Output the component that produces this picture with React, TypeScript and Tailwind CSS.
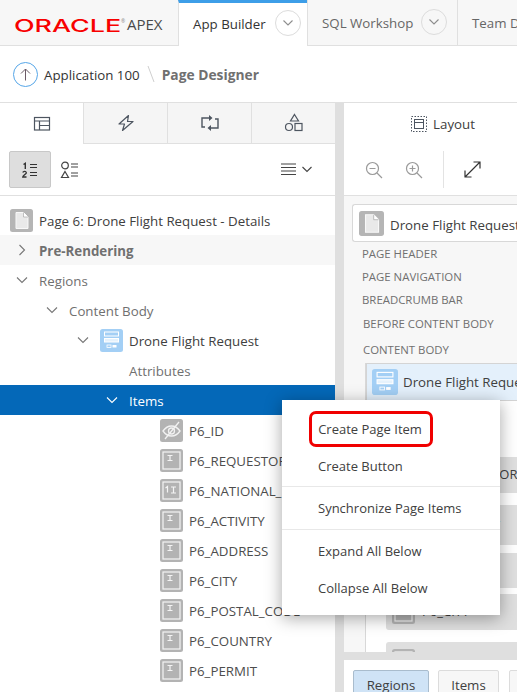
import type { ReactNode } from "react";

const font = "font-['Open_Sans','Noto_Sans',sans-serif]";

const Chevron = ({ open, className = "" }: { open: boolean; className?: string }) => (
  <svg width="12" height="12" viewBox="0 0 12 12" fill="none" stroke="currentColor" strokeWidth="1.1" className={className}>
    {open ? <path d="M1 3.500l5 5 5-5" /> : <path d="M3.500 1l5 5-5 5" />}
  </svg>
);

const NavCaret = () => (
  <span className="-mt-[4px] flex h-[26px] w-[26px] shrink-0 items-center justify-center rounded-full border border-[#dcdcdc]">
    <svg width="12" height="8" viewBox="0 0 12 8" fill="none" stroke="#8d8d8d" strokeWidth="1.1">
      <path d="M1.500 1.500L6 6l4.500-4.500" />
    </svg>
  </span>
);

const PageIcon = ({ size = 23 }: { size?: number }) => (
  <svg width={size} height={size} viewBox="0 0 23 23" className="shrink-0">
    <rect width="23" height="23" rx="2.500" fill="#b5b5b5" />
    <path d="M6 3.500h7.500L18 8v11.500H6z" fill="#e9e9e9" stroke="#f8f8f8" />
    <path d="M13.500 3.500V8H18" fill="#fff" stroke="#9d9d9d" strokeWidth="0.6" />
  </svg>
);

const RegionIcon = ({ size = 23 }: { size?: number }) => (
  <svg width={size} height={size} viewBox="0 0 23 23" className="shrink-0">
    <rect width="23" height="23" rx="2.500" fill="#a3cff5" />
    <rect x="4.500" y="3" width="14" height="4" fill="none" stroke="#fff" strokeWidth="1" />
    <rect x="4.500" y="9.500" width="14" height="3.500" fill="#e6f2fc" stroke="#fff" strokeWidth="1" />
    <rect x="7" y="16" width="4" height="2.500" fill="none" stroke="#fff" strokeWidth="0.8" />
    <rect x="12.500" y="16" width="4" height="2.500" fill="#fff" />
  </svg>
);

const ItemIcon = ({ kind = "text" }: { kind?: "text" | "hidden" | "number" }) => (
  <svg width="23" height="23" viewBox="0 0 23 23" className="shrink-0">
    <rect width="23" height="23" rx="2.500" fill="#b3b3b3" />
    {kind === "hidden" ? (
      <g fill="none" stroke="#f2f2f2" strokeWidth="1.300">
        <path d="M3 12c2.500-3.500 5.500-5 8.500-5s6 1.500 8.500 5c-2.500 3.500-5.500 5-8.500 5S5.500 15.500 3 12z" />
        <circle cx="11.500" cy="12" r="3" />
        <path d="M5 20L19 3" />
      </g>
    ) : (
      <>
        <rect x="3" y="3" width="17" height="17" fill="none" stroke="#f4f4f4" strokeWidth="1.200" />
        {kind === "text" ? (
          <path d="M7.500 6.500h5M10 6.500v5M7.500 11.500h5" stroke="#f4f4f4" strokeWidth="1.200" fill="none" />
        ) : (
          <path d="M5.500 9l2-1.500v6M11 8h5M13.500 8v6M11 14h5" stroke="#f4f4f4" strokeWidth="1.200" fill="none" />
        )}
      </>
    )}
  </svg>
);

const tabIcons: ReactNode[] = [
  <svg key="rendering" width="18" height="16" viewBox="0 0 18 16" fill="none" stroke="#4d5560" strokeWidth="1.200">
    <rect x="1.500" y="1.500" width="15" height="12.500" />
    <path d="M1.500 5h15M6.500 5v9M6.500 9.500h10" />
  </svg>,
  <svg key="dynamic" width="18" height="18" viewBox="0 0 18 18" fill="none" stroke="#4d5560" strokeWidth="1.200" strokeLinejoin="round">
    <path d="M11.500 1.500L2 10h5.500L5.500 16.500 16 7.500h-5.500z" />
  </svg>,
  <svg key="processing" width="20" height="18" viewBox="0 0 20 18" fill="none" stroke="#4d5560" strokeWidth="1.400">
    <path d="M9 4H2v9h3M11 14h7V5h-3" />
    <path d="M9 1v6l3.500-3zM11 11v6l-3.500-3z" fill="#4d5560" stroke="none" />
  </svg>,
  <svg key="shared" width="20" height="20" viewBox="0 0 20 20" fill="none" stroke="#4d5560" strokeWidth="1.200">
    <path d="M10.500 1.500l4 6.500h-8z" />
    <circle cx="5" cy="14" r="3.500" />
    <rect x="11" y="10.500" width="7" height="7" />
  </svg>,
];

const TreeRow = ({
  indent,
  open,
  icon,
  children,
  className = "",
}: {
  indent: number;
  open?: boolean;
  icon?: ReactNode;
  children: ReactNode;
  className?: string;
}) => (
  <div className={`flex h-[30px] shrink-0 items-center whitespace-nowrap ${className}`}>
    <span className="shrink-0" style={{ width: indent }} />
    {open !== undefined && <Chevron open={open} className="mr-[11px] shrink-0 text-[#777]" />}
    {icon && <span className="mr-[6px] flex shrink-0">{icon}</span>}
    <span className="pt-[4px]">{children}</span>
  </div>
);

const items: { name: string; kind?: "text" | "hidden" | "number" }[] = [
  { name: "P6_ID", kind: "hidden" },
  { name: "P6_REQUESTOR" },
  { name: "P6_NATIONAL_ID", kind: "number" },
  { name: "P6_ACTIVITY" },
  { name: "P6_ADDRESS" },
  { name: "P6_CITY" },
  { name: "P6_POSTAL_CODE" },
  { name: "P6_COUNTRY" },
  { name: "P6_PERMIT" },
];

const layoutTiles = [
  { text: "P6_REQUESTOR", height: "h-[36px]", mt: "mt-0" },
  { text: "P6_NATIONAL_ID", height: "h-[40px]", mt: "mt-[12px]", wrap: true },
  { text: "P6_ACTIVITY", height: "h-[35px]", mt: "mt-[8px]" },
  { text: "P6_CITY", height: "h-[36px]", mt: "mt-[6px]" },
  { text: "P6_POSTAL", height: "h-[36px]", mt: "mt-[12px]" },
];

export default function App() {
  return (
    <div className={`relative flex h-[692px] w-[517px] flex-col overflow-hidden bg-white text-[13.3px] text-[#404040] ${font}`}>
      {/* Top navigation */}
      <header className="flex h-[46px] shrink-0 border-b border-[#e0e0e0] bg-[#f7f7f7]">
        <div className="flex w-[178px] shrink-0 items-center pl-[14px] pt-[10px]">
          <span className="w-[107px] whitespace-nowrap">
            <span className="inline-block origin-left scale-x-[1.58] font-['Inter',sans-serif] text-[17px] font-medium leading-none text-[#f80000]">
              ORACLE
            </span>
          </span>
          <span className="-mt-[12px] w-[6px] text-[5px] leading-none text-[#888]">®</span>
          <span className="-mt-[7px] text-[15px] font-normal leading-none text-[#4a4a4a]">APEX</span>
        </div>
        <div className="-mb-px flex w-[129px] shrink-0 items-center border-t-[3px] border-l border-[#3d9ee8] border-l-[#e0e0e0] bg-white pl-[14px] text-[#333]">
          <span className="mr-[9px] whitespace-nowrap">App Builder</span>
          <NavCaret />
        </div>
        <div className="flex w-[150px] shrink-0 items-center border-l border-[#e0e0e0] pl-[14px] pt-[3px] text-[#666]">
          <span className="mr-[8px] whitespace-nowrap">SQL Workshop</span>
          <NavCaret />
        </div>
        <div className="flex min-w-0 flex-1 items-center overflow-hidden border-l border-[#e0e0e0] pl-[14px] pt-[3px] text-[#666]">
          <span className="whitespace-nowrap">Team Dev</span>
        </div>
      </header>

      {/* Breadcrumb */}
      <div className="flex h-[57px] shrink-0 items-center border-b border-[#e0e0e0] pl-[13px]">
        <span className="flex h-[25px] w-[25px] items-center justify-center rounded-full border border-[#56a6e8]">
          <svg width="11" height="13" viewBox="0 0 11 13" fill="none" stroke="#6b5a66" strokeWidth="1">
            <path d="M5.500 12.500V1M1 5.500L5.500 1 10 5.500" />
          </svg>
        </span>
        <span className="ml-[6px] pt-[4px] text-[#333]">Application 100</span>
        <svg width="10" height="18" viewBox="0 0 10 18" fill="none" stroke="#cfcfcf" className="ml-[6px]">
          <path d="M2 1l6 16" />
        </svg>
        <span className="ml-[6px] pt-[2px] text-[13.800px] font-bold text-[#707070]">Page Designer</span>
      </div>

      <div className="flex min-h-0 flex-1">
        {/* Left panel */}
        <div className="flex w-[335px] shrink-0 flex-col overflow-hidden">
          <div className="flex h-[41px] shrink-0">
            {tabIcons.map((icon, i) => (
              <div
                key={i}
                className={`flex items-center justify-center ${
                  i === 0 ? "w-[83px]" : "w-[84px] border-b border-l border-[#e0e0e0] bg-[#f5f5f5]"
                }`}
              >
                {icon}
              </div>
            ))}
          </div>
          <div className="flex h-[52px] shrink-0 items-center border-b border-[#e0e0e0] pl-[9px] pr-[23px]">
            <span className="flex h-[37px] w-[42px] items-center justify-center rounded-[2px] border border-[#c8c8c8] bg-[#dedede]">
              <svg width="18" height="18" viewBox="0 0 18 18" fill="#333" stroke="#333">
                <path d="M2.500 3.500l1.800-1.200V8" fill="none" strokeWidth="1.400" />
                <path d="M1.800 11.500c.5-1.500 3.700-1.500 3.500.5-.2 1-3.200 2.500-3.500 4h3.700" fill="none" strokeWidth="1.300" />
                <path d="M9 3.500h7M9 6.500h7M9 11.500h7M9 14.500h7" strokeWidth="1.200" />
              </svg>
            </span>
            <span className="ml-[8px] flex h-[37px] w-[22px] items-center justify-center">
              <svg width="20" height="18" viewBox="0 0 20 18" fill="none" stroke="#444" strokeWidth="1.200">
                <circle cx="5" cy="4.500" r="3.300" />
                <path d="M5 10.500l3.500 6h-7z" />
                <path d="M11 3h7M11 6h7M11 12h7M11 15h7" />
              </svg>
            </span>
            <span className="ml-auto flex items-center gap-[6px]">
              <svg width="15" height="13" viewBox="0 0 15 13" stroke="#444" strokeWidth="1.200">
                <path d="M0 1h15M0 4.500h15M0 8h15M0 11.500h15" />
              </svg>
              <svg width="10" height="7" viewBox="0 0 10 7" fill="none" stroke="#444" strokeWidth="1.100">
                <path d="M.5 1L5 5.500 9.500 1" />
              </svg>
            </span>
          </div>

          {/* Tree */}
          <div className="flex min-h-0 flex-1 flex-col pt-[9px]">
            <TreeRow indent={10} icon={<PageIcon />} className="text-[#404040]">
              Page 6: Drone Flight Request - Details
            </TreeRow>
            <TreeRow indent={16} open={false} className="bg-[#f7f7f7] font-bold text-[#707070]">
              Pre-Rendering
            </TreeRow>
            <TreeRow indent={16} open className="text-[#707070]">
              Regions
            </TreeRow>
            <TreeRow indent={46} open className="text-[#707070]">
              Content Body
            </TreeRow>
            <TreeRow indent={77} open icon={<RegionIcon />} className="text-[#404040]">
              Drone Flight Request
            </TreeRow>
            <TreeRow indent={129} className="text-[#707070]">
              Attributes
            </TreeRow>
            <TreeRow indent={106} open className="bg-[#0468b8] text-white [&_svg]:text-white">
              Items
            </TreeRow>
            {items.map((item) => (
              <TreeRow key={item.name} indent={160} icon={<ItemIcon kind={item.kind} />} className="text-[#4d4d4d]">
                {item.name}
              </TreeRow>
            ))}
          </div>
        </div>

        {/* Splitter */}
        <div className="w-[9px] shrink-0 bg-[#dfdfdf]" />

        {/* Right panel */}
        <div className="flex min-w-0 flex-1 flex-col overflow-hidden">
          <div className="flex h-[41px] shrink-0 items-center justify-center gap-[6px] pl-[25px] pt-px text-[#404040]">
            <svg width="16" height="16" viewBox="0 0 16 16" fill="none" stroke="#4d5560" className="shrink-0">
              <rect x="0.500" y="0.500" width="15" height="15" strokeDasharray="1.500 1.500" />
              <rect x="3.500" y="3.500" width="9" height="9" />
              <path d="M3.500 6.500h9" />
            </svg>
            <span className="pt-[2px]">Layout</span>
          </div>
          <div className="flex h-[52px] shrink-0 items-center border-b border-[#e0e0e0] pl-[21px]">
            <svg width="18" height="18" viewBox="0 0 18 18" fill="none" stroke="#9a9a9a" strokeWidth="1.200" className="shrink-0">
              <circle cx="7.500" cy="7.500" r="6" />
              <path d="M4.500 7.500h6M12 12l5 5" />
            </svg>
            <svg width="18" height="18" viewBox="0 0 18 18" fill="none" stroke="#9a9a9a" strokeWidth="1.200" className="ml-[22px] shrink-0">
              <circle cx="7.500" cy="7.500" r="6" />
              <path d="M4.500 7.500h6M7.500 4.500v6M12 12l5 5" />
            </svg>
            <span className="ml-[20px] h-[37px] w-px shrink-0 bg-[#e3e3e3]" />
            <svg width="17" height="17" viewBox="0 0 17 17" fill="none" stroke="#333" strokeWidth="1.200" className="ml-[20px] shrink-0">
              <path d="M1 16L16 1M9.500 1H16v6.500M1 9.500V16h6.500" />
            </svg>
          </div>

          {/* Layout canvas */}
          <div className="flex min-h-0 flex-1 flex-col overflow-hidden bg-[#f7f7f7] pl-[8px] pt-[8px]">
            <div className="flex h-[38px] w-[180px] shrink-0 items-center rounded-l-[3px] border border-r-0 border-[#d8d8d8] bg-white pl-[6px] text-[#404040]">
              <PageIcon size={25} />
              <span className="ml-[6px] whitespace-nowrap pt-[5px]">Drone Flight Request</span>
            </div>
            <div className="ml-[10px] flex flex-col whitespace-nowrap text-[11.400px] text-[#707070]">
              <span className="h-[23px] leading-[23px]">PAGE HEADER</span>
              <span className="h-[23px] leading-[23px]">PAGE NAVIGATION</span>
              <span className="h-[24px] leading-[23px]">BREADCRUMB BAR</span>
              <span className="ml-px h-[26px] leading-[23px]">BEFORE CONTENT BODY</span>
              <span className="ml-px h-[25px] leading-[23px]">CONTENT BODY</span>
            </div>
            <div className="ml-[13px] flex min-h-0 flex-1 flex-col border-l border-[#d8d8d8] bg-white">
              <div className="flex h-[38px] w-[170px] shrink-0 items-center border border-r-0 border-[#d4d4d4] bg-[#e4f0fb] pl-[5px] text-[#404040]">
                <RegionIcon size={26} />
                <span className="ml-[5px] whitespace-nowrap pt-[2px]">Drone Flight Request</span>
              </div>
              <div className="ml-[20px] mt-[56px] flex flex-col overflow-hidden text-[13px]">
                {layoutTiles.map((tile) => (
                  <div
                    key={tile.text}
                    className={`flex w-[200px] shrink-0 items-center rounded-l-[3px] bg-[#dfdfdf] pl-[6px] ${tile.height} ${tile.mt}`}
                  >
                    <ItemIcon />
                    <span className={`ml-[7px] ${tile.wrap ? "w-[78px] break-all leading-[15px]" : "whitespace-nowrap"}`}>
                      {tile.text}
                    </span>
                  </div>
                ))}
              </div>
            </div>
          </div>

          {/* Bottom gallery tabs */}
          <div className="flex h-[40px] shrink-0 overflow-hidden border-t-[8px] border-[#dfdfdf] bg-white pl-[9px] pt-[10px] text-[#404040]">
            <span className="flex h-[40px] w-[76px] shrink-0 justify-center rounded-[2px] border border-[#a9bccd] bg-[#cfe3f6] pt-[5px]">Regions</span>
            <span className="ml-[9px] flex h-[40px] w-[61px] shrink-0 justify-center rounded-[2px] border border-[#dcdcdc] bg-[#f7f7f7] pt-[5px]">Items</span>
            <span className="ml-[10px] h-[40px] w-[30px] shrink-0 rounded-[2px] border border-[#dcdcdc] bg-[#f7f7f7]" />
          </div>
        </div>
      </div>

      {/* Context menu */}
      <div className="absolute left-[282px] top-[400px] flex h-[215px] w-[218px] flex-col bg-white pt-[11px] text-[13px] text-[#404040] shadow-[0_3px_16px_rgba(0,0,0,0.35)]">
        <div className="ml-[27px] flex h-[36px] w-[124px] items-center justify-center whitespace-nowrap rounded-[7px] border-[3px] border-[#f00000] pr-[2px] pt-[2px]">
          Create Page Item
        </div>
        <div className="mt-[2px] flex h-[36px] items-center pl-[36px]">Create Button</div>
        <div className="mt-[1px] border-t border-[#e8e8e8]" />
        <div className="flex h-[42px] items-center pl-[36px] pt-[2px]">Synchronize Page Items</div>
        <div className="border-t border-[#e8e8e8]" />
        <div className="flex h-[42px] items-center pl-[36px] pt-[1px]">Expand All Below</div>
        <div className="-mt-[5px] flex h-[42px] items-center pl-[36px] pt-[1px]">Collapse All Below</div>
      </div>
    </div>
  );
}
